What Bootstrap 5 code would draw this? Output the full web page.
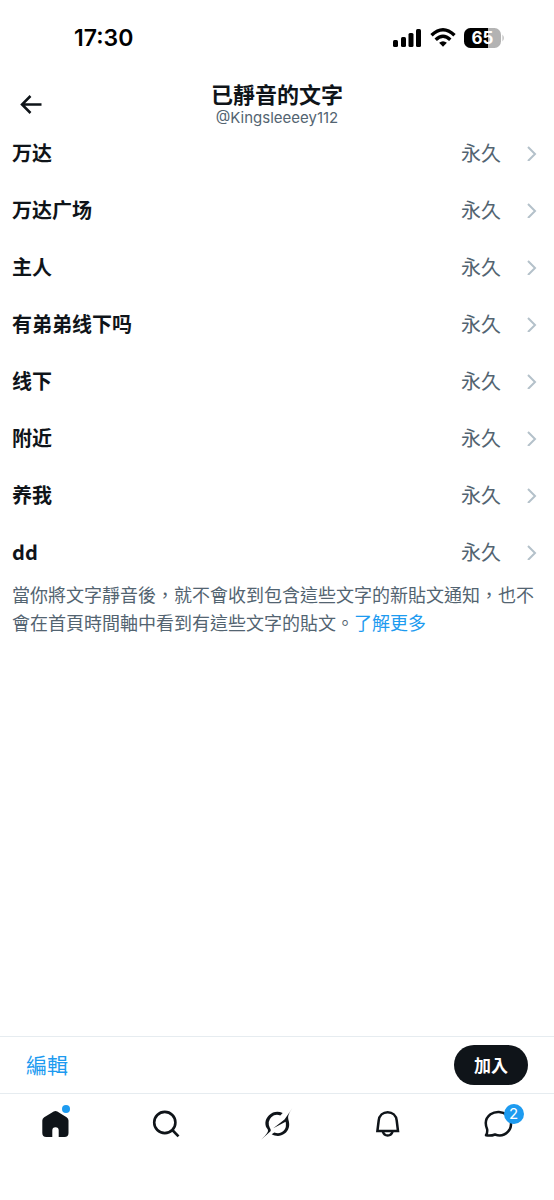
<!DOCTYPE html>
<html lang="zh-Hant">
<head>
<meta charset="utf-8">
<meta name="viewport" content="width=device-width, initial-scale=1">
<title>已靜音的文字</title>
<link href="https://cdn.jsdelivr.net/npm/bootstrap@5.3.0/dist/css/bootstrap.min.css" rel="stylesheet">
<style>
  :root { --ink: #0f1419; --muted: #536471; --accent: #1d9bf0; --line: #e6ecf0; }
  body { font-family: "Noto Sans CJK TC", "Noto Sans CJK SC", sans-serif; color: var(--ink); background: #fff; }
  svg { display: block; flex: none; }
  .status-bar { height: 76px; padding: 0 49px 0 74px; font-family: Inter, sans-serif; color: #000; }
  .clock { font-size: 23px; font-weight: 600; }
  .top-bar { height: 48px; padding-top: 3px; }
  .back-btn { left: 12px; top: 10px; }
  .page-title { font-size: 22px; line-height: 28px; font-weight: 700; }
  .handle { font-family: Inter, "Noto Sans CJK TC", sans-serif; font-size: 15px; line-height: 22px; color: var(--muted); }
  .word-row { height: 57px; padding: 0 17px 0 12px; font-size: 20px; color: var(--ink); }
  .word-row .duration { color: var(--muted); margin-right: 24px; }
  .hint { font-size: 18px; line-height: 28px; color: var(--muted); padding: 0 12px; }
  .accent-link { color: var(--accent); }
  .action-bar { height: 57px; padding: 0 26px; border-top: 1px solid var(--line); }
  .edit-btn { font-size: 21px; color: var(--accent); }
  .add-btn { font-size: 17px; line-height: 24px; font-weight: 700; padding: 8px 20px; background: var(--ink); color: #fff; }
  .tab-bar { height: 107px; padding-top: 14px; border-top: 1px solid var(--line); }
  .tab-dot { width: 8px; height: 8px; left: 23px; top: -3px; background: var(--accent); }
  .tab-count { width: 20px; height: 20px; left: 21px; top: -4px; background: var(--accent); color: #fff; font: 15px/20px Inter, sans-serif; }
</style>
</head>
<body>
<div class="d-flex flex-column min-vh-100">
  <div class="status-bar d-flex align-items-center justify-content-between">
    <span class="clock">17:30</span>
    <div class="d-flex align-items-center">
      <svg class="me-2" width="30" height="20" viewBox="0 0 30 20" aria-hidden="true"><rect x="1" y="12" width="5" height="7" rx="1.5"/><rect x="9" y="9" width="5" height="10" rx="1.5"/><rect x="16.500" y="5" width="5" height="14" rx="1.5"/><rect x="24" y="1" width="5" height="18" rx="1.500"/></svg>
      <svg class="me-2" width="26" height="20" viewBox="0 0 26 20" aria-hidden="true"><g fill="none" stroke="#000" stroke-width="3.400"><path d="M1.500 7.300Q13-3.700 24.500 7.300"/><path d="M5.700 11.700Q13 4.800 20.300 11.700"/></g><path d="M13 18.800l-3.900-4q3.900-3.300 7.800 0z"/></svg>
      <svg width="41" height="20" viewBox="0 0 41 20" role="img" aria-label="65%"><defs><clipPath id="cell"><rect width="37" height="20" rx="6.500"/></clipPath></defs><g clip-path="url(#cell)"><rect width="37" height="20" fill="#b3b3b3"/><rect width="24" height="20"/></g><path d="M38.500 6.500q2.500 3.500 0 7z" fill="#b3b3b3"/><text x="18.500" y="16" text-anchor="middle" font-size="17" font-weight="700" fill="#fff">65</text></svg>
    </div>
  </div>

  <header class="top-bar position-relative text-center">
    <button class="back-btn btn border-0 p-0 position-absolute" type="button" aria-label="返回">
      <svg width="36" height="36" viewBox="0 0 36 36" fill="none" stroke="#0f1419" stroke-width="2.500"><path d="M29.500 18.500H10M18.500 10L10 18.500l8.500 8.500"/></svg>
    </button>
    <h1 class="page-title m-0">已靜音的文字</h1>
    <div class="handle">@Kingsleeeey112</div>
  </header>

  <main class="flex-grow-1">
    <nav id="words" aria-label="已靜音的文字">
      <a href="#" class="word-row d-flex align-items-center text-decoration-none"><span class="fw-bold me-auto" lang="zh-Hans">万达</span><span class="duration">永久</span><svg width="12" height="16" viewBox="0 0 12 16" fill="none" stroke="#b4c1ca" stroke-width="2"><path d="M3 2l7 7-7 7"/></svg></a>
      <a href="#" class="word-row d-flex align-items-center text-decoration-none"><span class="fw-bold me-auto" lang="zh-Hans">万达广场</span><span class="duration">永久</span><svg width="12" height="16" viewBox="0 0 12 16" fill="none" stroke="#b4c1ca" stroke-width="2"><path d="M3 2l7 7-7 7"/></svg></a>
      <a href="#" class="word-row d-flex align-items-center text-decoration-none"><span class="fw-bold me-auto" lang="zh-Hans">主人</span><span class="duration">永久</span><svg width="12" height="16" viewBox="0 0 12 16" fill="none" stroke="#b4c1ca" stroke-width="2"><path d="M3 2l7 7-7 7"/></svg></a>
      <a href="#" class="word-row d-flex align-items-center text-decoration-none"><span class="fw-bold me-auto" lang="zh-Hans">有弟弟线下吗</span><span class="duration">永久</span><svg width="12" height="16" viewBox="0 0 12 16" fill="none" stroke="#b4c1ca" stroke-width="2"><path d="M3 2l7 7-7 7"/></svg></a>
      <a href="#" class="word-row d-flex align-items-center text-decoration-none"><span class="fw-bold me-auto" lang="zh-Hans">线下</span><span class="duration">永久</span><svg width="12" height="16" viewBox="0 0 12 16" fill="none" stroke="#b4c1ca" stroke-width="2"><path d="M3 2l7 7-7 7"/></svg></a>
      <a href="#" class="word-row d-flex align-items-center text-decoration-none"><span class="fw-bold me-auto" lang="zh-Hans">附近</span><span class="duration">永久</span><svg width="12" height="16" viewBox="0 0 12 16" fill="none" stroke="#b4c1ca" stroke-width="2"><path d="M3 2l7 7-7 7"/></svg></a>
      <a href="#" class="word-row d-flex align-items-center text-decoration-none"><span class="fw-bold me-auto" lang="zh-Hans">养我</span><span class="duration">永久</span><svg width="12" height="16" viewBox="0 0 12 16" fill="none" stroke="#b4c1ca" stroke-width="2"><path d="M3 2l7 7-7 7"/></svg></a>
      <a href="#" class="word-row d-flex align-items-center text-decoration-none"><span class="fw-bold me-auto">dd</span><span class="duration">永久</span><svg width="12" height="16" viewBox="0 0 12 16" fill="none" stroke="#b4c1ca" stroke-width="2"><path d="M3 2l7 7-7 7"/></svg></a>
    </nav>
    <p class="hint m-0">當你將文字靜音後，就不會收到包含這些文字的新貼文通知，也不會在首頁時間軸中看到有這些文字的貼文。<a href="#" class="accent-link text-decoration-none">了解更多</a></p>
  </main>

  <div class="action-bar d-flex align-items-center justify-content-between">
    <button type="button" class="edit-btn btn border-0 p-0">編輯</button>
    <button type="button" class="add-btn btn border-0 rounded-pill">加入</button>
  </div>

  <nav class="tab-bar d-flex" aria-label="主選單">
    <a href="#" class="col d-flex justify-content-center" aria-label="首頁"><span class="position-relative">
      <svg width="32" height="32" viewBox="0 0 32 32" fill="#0f1419"><path d="M14.700 3.600q1.800-1.100 3.600 0l9.300 5.600q1.900 1.200 1.900 3.300V25q0 4-4 4h-5.800v-6.500q0-3.200-3.200-3.200t-3.200 3.200V29H7.300q-4 0-4-4V12.500q0-2.100 1.900-3.300z"/></svg>
      <span class="tab-dot position-absolute rounded-circle"></span></span></a>
    <a href="#" class="col d-flex justify-content-center" aria-label="搜尋"><svg width="32" height="32" viewBox="0 0 32 32" fill="none" stroke="#0f1419" stroke-width="2.600"><circle cx="14.800" cy="14.500" r="10.600"/><path d="M22.300 22l6.200 6.300"/></svg></a>
    <a href="#" class="col d-flex justify-content-center" aria-label="Grok"><svg width="32" height="32" viewBox="0 0 32 32" fill="#0f1419"><path d="M21.700 4.900Q14 1.800 8 7.200C3.600 11.500 3.300 17.500 6.700 21.300Q8.800 24 0 31.700L9.300 23.500C10.500 22.200 9.300 21 8.700 19.500Q6.100 13.500 10.300 9.300 14.300 5.500 19.300 7.500z"/><path d="M12.300 20.300L23.500 11.500 31.500 0Q26 7.500 27.300 11.200C29.500 18 27.600 22.500 23.700 25.600 19.500 28.800 14.500 28.400 10.700 26.200L13.300 24.500C17 26 20.100 25.300 22.600 22.800Q26 19.500 24.600 13.800z"/></svg></a>
    <a href="#" class="col d-flex justify-content-center" aria-label="通知"><svg width="32" height="32" viewBox="0 0 32 32" fill="none" stroke="#0f1419" stroke-width="2.500"><path d="M5.400 23L6.700 12.500C7.300 7.500 11 4.200 15.700 4.200S24.100 7.500 24.700 12.500L26 23z"/><path d="M10.800 23.500Q12 27.500 15.700 27.500T20.600 23.500"/></svg></a>
    <a href="#" class="col d-flex justify-content-center text-decoration-none" aria-label="訊息，2 則未讀"><span class="position-relative">
      <svg width="32" height="32" viewBox="0 0 32 32" fill="none" stroke="#0f1419" stroke-width="2.500" stroke-linejoin="round"><path d="M3 27.200Q4.500 25.500 4.200 21.500C1.500 15 3.200 9.500 7.500 6.300 12.500 2.800 19.500 3.200 24 7.200 29 12 29.300 19 25 23.600 21.300 27.500 16.500 28.300 12 26.500Q7.500 28.300 3 27.200z"/></svg>
      <span class="tab-count position-absolute rounded-circle text-center">2</span></span></a>
  </nav>
</div>
<script src="https://cdn.jsdelivr.net/npm/bootstrap@5.3.0/dist/js/bootstrap.bundle.min.js"></script>
</body>
</html>
